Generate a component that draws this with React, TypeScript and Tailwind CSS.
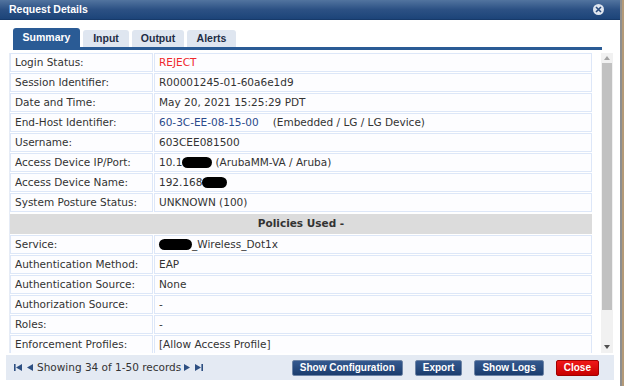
import { ReactNode } from 'react'

type Row = { label: string; value: ReactNode }

const blob = (w: number) => (
  <span className={`inline-block h-[11px] bg-black rounded-full align-middle ${w === 30 ? 'w-[30px]' : w === 25 ? 'w-[25px]' : 'w-[33px]'}`} />
)

const sessionRows: Row[] = [
  { label: 'Login Status:', value: <span className="text-[#f0282d]">REJECT</span> },
  { label: 'Session Identifier:', value: 'R00001245-01-60a6e1d9' },
  { label: 'Date and Time:', value: 'May 20, 2021 15:25:29 PDT' },
  {
    label: 'End-Host Identifier:',
    value: (
      <>
        <span className="text-[#2b4a8b]">60-3C-EE-08-15-00</span>
        <span className="ml-[14px]">(Embedded / LG / LG Device)</span>
      </>
    ),
  },
  { label: 'Username:', value: '603CEE081500' },
  {
    label: 'Access Device IP/Port:',
    value: (
      <>
        10.1{blob(30)}
        <span className="ml-[3px]">(ArubaMM-VA / Aruba)</span>
      </>
    ),
  },
  {
    label: 'Access Device Name:',
    value: (
      <>
        192.168{blob(25)}
      </>
    ),
  },
  { label: 'System Posture Status:', value: 'UNKNOWN (100)' },
]

const policyRows: Row[] = [
  {
    label: 'Service:',
    value: (
      <>
        {blob(33)}_Wireless_Dot1x
      </>
    ),
  },
  { label: 'Authentication Method:', value: 'EAP' },
  { label: 'Authentication Source:', value: 'None' },
  { label: 'Authorization Source:', value: '-' },
  { label: 'Roles:', value: '-' },
  { label: 'Enforcement Profiles:', value: '[Allow Access Profile]' },
]

function DataRow({ row }: { row: Row }) {
  return (
    <div className="flex gap-px h-[19px] shrink-0">
      <div className="w-[143px] shrink-0 border border-[#dde7f8] bg-[#fdfdff] pl-[4px] flex items-center text-[#333]">
        {row.label}
      </div>
      <div className="flex-1 border border-[#dde7f8] bg-[#fdfdff] pl-[4px] flex items-center text-[#333] whitespace-nowrap">
        {row.value}
      </div>
    </div>
  )
}

function Btn({ children, red }: { children: ReactNode; red?: boolean }) {
  return (
    <button
      className={`h-[16px] px-[7px] rounded-[2px] text-white font-bold text-[10px] leading-none border ${
        red
          ? 'bg-gradient-to-b from-[#f01818] to-[#c80000] border-[#a00000]'
          : 'bg-gradient-to-b from-[#34598f] to-[#1b3d6e] border-[#6d84a6]'
      }`}
    >
      {children}
    </button>
  )
}

export default function App() {
  return (
    <div className="w-[624px] h-[386px] flex overflow-hidden bg-white" style={{ fontFamily: '"DejaVu Sans", Verdana, sans-serif' }}>
      {/* Modal */}
      <div className="w-[620px] h-full flex flex-col bg-white">
        {/* Title bar */}
        <div className="h-[20px] shrink-0 bg-gradient-to-b from-[#52749f] via-[#2c5184] to-[#1c4479] flex items-center justify-between pl-[9px] pr-[16px] border-b border-[#173a6a]">
          <span className="text-white font-bold text-[10.5px] mt-[1px]" style={{ fontFamily: '"Liberation Sans", Arial, sans-serif' }}>
            Request Details
          </span>
          <span className="w-[11px] h-[11px] rounded-full bg-[#dfe5ee] flex items-center justify-center">
            <svg width="7" height="7" viewBox="0 0 7 7">
              <path d="M1 1L6 6M6 1L1 6" stroke="#2a4c7e" strokeWidth="1.6" />
            </svg>
          </span>
        </div>

        {/* Tabs */}
        <div className="shrink-0 pt-[8px] pl-[13px] pr-[18px]" style={{ fontFamily: '"Liberation Sans", Arial, sans-serif' }}>
          <div className="flex gap-[3px] items-end h-[19px]">
            <div className="h-[19px] w-[67px] bg-[#2a5b95] rounded-t-[3px] text-white font-bold text-[10.5px] flex items-center justify-center">
              Summary
            </div>
            <div className="h-[17px] w-[46px] bg-[#dfe6f0] rounded-t-[3px] text-[#1e2d45] font-bold text-[10.5px] flex items-center justify-center">
              Input
            </div>
            <div className="h-[17px] w-[52px] bg-[#dfe6f0] rounded-t-[3px] text-[#1e2d45] font-bold text-[10.5px] flex items-center justify-center">
              Output
            </div>
            <div className="h-[17px] w-[49px] bg-[#dfe6f0] rounded-t-[3px] text-[#1e2d45] font-bold text-[10.5px] flex items-center justify-center">
              Alerts
            </div>
          </div>
          <div className="h-[3px] bg-[#2a5b95]" />
        </div>

        {/* Content */}
        <div className="shrink-0 flex pl-[9px] pr-[7px] pt-[3px] h-[303px] text-[10.5px]">
          <div className="flex-1 flex flex-col gap-px border-l border-[#e6ecf6] overflow-hidden">
            {sessionRows.map((r) => (
              <DataRow key={r.label} row={r} />
            ))}
            <div className="h-[20px] shrink-0 bg-[#dcdcdc] flex items-center justify-center font-bold text-[#333] mt-px">
              Policies Used -
            </div>
            {policyRows.map((r) => (
              <DataRow key={r.label} row={r} />
            ))}
          </div>
          {/* Scrollbar */}
          <div className="w-[12px] ml-[9px] bg-[#f1f1f1] flex flex-col items-center">
            <div className="h-[10px] flex items-center justify-center">
              <svg width="6" height="4" viewBox="0 0 6 4">
                <path d="M0 4L3 0L6 4Z" fill="#a3a3a3" />
              </svg>
            </div>
            <div className="w-[10px] h-[247px] bg-[#c1c1c1]" />
            <div className="flex-1" />
            <div className="h-[12px] flex items-center justify-center">
              <svg width="6" height="4" viewBox="0 0 6 4">
                <path d="M0 0L3 4L6 0Z" fill="#505050" />
              </svg>
            </div>
          </div>
        </div>

        {/* Footer */}
        <div className="shrink-0 mx-[6px] mt-[2px] h-[25px] bg-[#e4eaf3] flex items-center pl-[8px] pr-[15px]">
          <div className="flex items-center gap-[3px] text-[10.5px] text-[#333]">
            <svg width="8" height="7" viewBox="0 0 8 7">
              <rect x="0" y="0" width="1.6" height="7" fill="#2d4f82" />
              <path d="M8 0L2 3.5L8 7Z" fill="#2d4f82" />
            </svg>
            <svg width="6" height="7" viewBox="0 0 6 7" className="ml-[2px]">
              <path d="M6 0L0 3.5L6 7Z" fill="#2d4f82" />
            </svg>
            <span className="ml-[1px]">Showing 34 of 1-50 records</span>
            <svg width="6" height="7" viewBox="0 0 6 7">
              <path d="M0 0L6 3.5L0 7Z" fill="#2d4f82" />
            </svg>
            <svg width="8" height="7" viewBox="0 0 8 7" className="ml-[2px]">
              <path d="M0 0L6 3.5L0 7Z" fill="#2d4f82" />
              <rect x="6.4" y="0" width="1.6" height="7" fill="#2d4f82" />
            </svg>
          </div>
          <div className="flex-1" />
          <div className="flex items-center gap-[12px]" style={{ fontFamily: '"Liberation Sans", Arial, sans-serif' }}>
            <Btn>Show Configuration</Btn>
            <Btn>Export</Btn>
            <Btn>Show Logs</Btn>
            <Btn red>Close</Btn>
          </div>
        </div>
      </div>

      {/* Backdrop edge */}
      <div className="w-[2px] h-full bg-[#8f8f8f]" />
      <div className="w-[2px] h-full bg-[#b49a78]" />
    </div>
  )
}
